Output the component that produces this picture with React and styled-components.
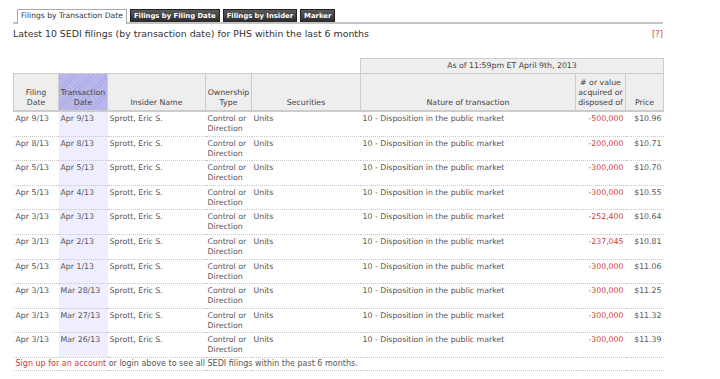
import React from "react";
import styled, { createGlobalStyle } from "styled-components";

const Global = createGlobalStyle`
  html, body { margin: 0; padding: 0; background: #fff; }
  body { font-family: "DejaVu Sans", Verdana, sans-serif; color: #444; }
`;

const Page = styled.div`
  padding: 8px 0 0 13px;
  width: 650px;
`;

const TabBar = styled.div`
  display: flex;
  align-items: flex-end;
  gap: 3px;
  border-bottom: 2px solid #c4c4c4;
  padding-left: 4px;
  height: 14px;
`;

const Tab = styled.div`
  font-size: ${(p) => (p.$active ? "7.6px" : "6.85px")};
  line-height: 12px;
  padding: 0 3px;
  height: ${(p) => (p.$active ? "15px" : "13px")};
  box-sizing: border-box;
  border: 1px solid ${(p) => (p.$active ? "#aaa" : "#222")};
  border-bottom: none;
  background: ${(p) => (p.$active ? "#fff" : "linear-gradient(#5a5a5a, #2a2a2a)")};
  color: ${(p) => (p.$active ? "#333" : "#fff")};
  font-weight: ${(p) => (p.$active ? "normal" : "bold")};
  margin-bottom: ${(p) => (p.$active ? "-2px" : "0")};
  white-space: nowrap;
`;

const TitleRow = styled.div`
  display: flex;
  justify-content: space-between;
  align-items: center;
  margin-top: 4px;
  font-size: 9.4px;
  color: #333;
`;

const Help = styled.span`
  color: #d04040;
  font-size: 8.4px;
`;

const Table = styled.table`
  margin-top: 19px;
  width: 650px;
  border-collapse: collapse;
  table-layout: fixed;
  font-size: 7.8px;
  line-height: 10px;
`;

const AsOf = styled.th`
  background: #eee;
  border: 1px solid #ccc;
  font-weight: normal;
  color: #444;
  height: 14px;
  padding: 0;
  text-align: center;
`;

const Head = styled.th`
  background: ${(p) =>
    p.$sel
      ? "repeating-linear-gradient(135deg, #a9a9e4 0 1px, #bcbcee 1px 3px)"
      : "#eee"};
  border: 1px solid #cdcdcd;
  border-bottom: 2px solid #ccc;
  font-weight: normal;
  color: #444;
  vertical-align: bottom;
  text-align: center;
  padding: 0 1px 2px;
  height: 34px;
  white-space: nowrap;
`;

const Cell = styled.td`
  vertical-align: top;
  padding: 2px 2px 1.6px;
  text-align: ${(p) => (p.$right ? "right" : "left")};
  color: ${(p) => (p.$red ? "#d03b3b" : "#555")};
  background: ${(p) => (p.$sel ? "#eeeeff" : "transparent")};
  border-bottom: 1px dotted #c8c8c8;
  height: 20px;
  white-space: nowrap;
`;

const FootCell = styled.td`
  padding: 1px 2px 1px;
  font-size: 8px;
  color: #555;
  border-bottom: 1px dotted #c8c8c8;
`;

const Red = styled.span`
  color: #d03b3b;
`;

const rows = [
  ["Apr 9/13", "Apr 9/13", "-500,000", "$10.96"],
  ["Apr 8/13", "Apr 8/13", "-200,000", "$10.71"],
  ["Apr 5/13", "Apr 5/13", "-300,000", "$10.70"],
  ["Apr 5/13", "Apr 4/13", "-300,000", "$10.55"],
  ["Apr 3/13", "Apr 3/13", "-252,400", "$10.64"],
  ["Apr 3/13", "Apr 2/13", "-237,045", "$10.81"],
  ["Apr 5/13", "Apr 1/13", "-300,000", "$11.06"],
  ["Apr 3/13", "Mar 28/13", "-300,000", "$11.25"],
  ["Apr 3/13", "Mar 27/13", "-300,000", "$11.32"],
  ["Apr 3/13", "Mar 26/13", "-300,000", "$11.39"],
];

export default function App() {
  return (
    <Page>
      <Global />
      <TabBar>
        <Tab $active>Filings by Transaction Date</Tab>
        <Tab>Filings by Filing Date</Tab>
        <Tab>Filings by Insider</Tab>
        <Tab>Marker</Tab>
      </TabBar>
      <TitleRow>
        <span>Latest 10 SEDI filings (by transaction date) for PHS within the last 6 months</span>
        <Help>[?]</Help>
      </TitleRow>
      <Table>
        <colgroup>
          <col style={{ width: 45 }} />
          <col style={{ width: 49 }} />
          <col style={{ width: 98 }} />
          <col style={{ width: 46 }} />
          <col style={{ width: 109 }} />
          <col style={{ width: 215 }} />
          <col style={{ width: 50 }} />
          <col style={{ width: 38 }} />
        </colgroup>
        <thead>
          <tr>
            <th colSpan={5} />
            <AsOf colSpan={3}>As of 11:59pm ET April 9th, 2013</AsOf>
          </tr>
          <tr>
            <Head>Filing<br />Date</Head>
            <Head $sel>Transaction<br />Date</Head>
            <Head>Insider Name</Head>
            <Head>Ownership<br />Type</Head>
            <Head>Securities</Head>
            <Head>Nature of transaction</Head>
            <Head># or value<br />acquired or<br />disposed of</Head>
            <Head>Price</Head>
          </tr>
        </thead>
        <tbody>
          {rows.map((r, i) => (
            <tr key={i}>
              <Cell>{r[0]}</Cell>
              <Cell $sel>{r[1]}</Cell>
              <Cell>Sprott, Eric S.</Cell>
              <Cell>Control or<br />Direction</Cell>
              <Cell>Units</Cell>
              <Cell>10 - Disposition in the public market</Cell>
              <Cell $right $red>{r[2]}</Cell>
              <Cell $right>{r[3]}</Cell>
            </tr>
          ))}
          <tr>
            <FootCell colSpan={8}>
              <Red>Sign up for an account</Red> or login above to see all SEDI filings within the past 6 months.
            </FootCell>
          </tr>
        </tbody>
      </Table>
    </Page>
  );
}
